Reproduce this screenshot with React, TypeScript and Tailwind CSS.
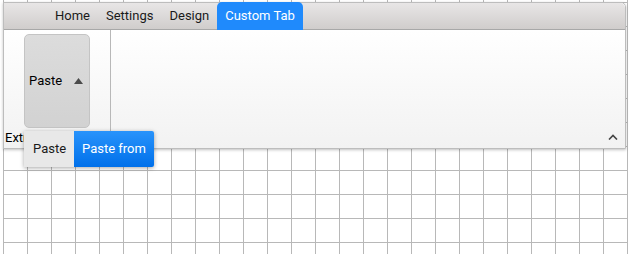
import React from "react";

export default function App() {
  return (
    <div
      className="relative w-[633px] h-[254px] overflow-hidden bg-white"
      style={{ fontFamily: "Roboto, 'Liberation Sans', sans-serif" }}
    >
      <div className="ml-[3px] w-[625px] h-[254px] pt-[2px] bg-[linear-gradient(to_right,#b8b8b8_1px,transparent_1px),linear-gradient(to_bottom,#b8b8b8_1px,transparent_1px)] bg-[size:24px_24px] bg-[position:0px_2px]">
        <div className="relative w-[623px] border border-[#bdbdbd] rounded-tr-[5px] shadow-[0_1px_3px_rgba(0,0,0,0.25)]">
          {/* header */}
          <div className="h-[27px] flex items-stretch pl-[43px] rounded-tr-[5px] bg-[linear-gradient(to_bottom,#e8e6e6,#d0cdcc)] border-b border-[#a8a8a8] text-[13px] text-[#1a1a1a]">
            <div className="px-[8px] flex items-center">Home</div>
            <div className="px-[8px] flex items-center">Settings</div>
            <div className="px-[8px] flex items-center">Design</div>
            <div className="px-[8px] flex items-center -mt-[1px] -mb-[1px] bg-[#1f8afc] text-white rounded-t-[5px]">Custom Tab</div>
          </div>
          {/* body */}
          <div className="relative h-[118px] flex bg-[linear-gradient(to_bottom,#ffffff,#f2f2f2)]">
            <div className="w-[107px] border-r border-[#b8b8b8] flex flex-col">
              <div className="mt-[4px] ml-[20px] w-[66px] h-[94px] rounded-[5px] border border-[#c4c4c4] bg-[linear-gradient(to_bottom,#dcdcdc,#d2d2d2)] flex items-center pl-[4px] text-[13px] text-black">
                <span>Paste</span>
                <svg className="ml-[12px]" width="9" height="6" viewBox="0 0 9 6">
                  <polygon points="4.5,0 9,6 0,6" fill="#4a4a4a" />
                </svg>
              </div>
              <div className="mt-[2px] pl-[1px] text-[13px] text-black leading-[16px]">Extra</div>
            </div>
            <svg className="absolute right-[7px] bottom-[8px]" width="10" height="6" viewBox="0 0 10 6">
              <polyline points="1,5.5 5,1.5 9,5.5" fill="none" stroke="#444" strokeWidth="1.6" />
            </svg>
          </div>
        </div>
      </div>
      {/* popup */}
      <div className="absolute left-[24px] top-[131px] h-[36px] flex text-[13px] shadow-[0_1px_4px_rgba(0,0,0,0.35)] rounded-r-[2px] overflow-hidden">
        <div className="w-[50px] bg-[#e8e8e8] flex items-center pl-[9px] text-[#1a1a1a]">Paste</div>
        <div className="w-[80px] bg-[linear-gradient(to_bottom,#2893fb,#0070ea)] flex items-center pl-[8px] text-white">Paste from</div>
      </div>
    </div>
  );
}
